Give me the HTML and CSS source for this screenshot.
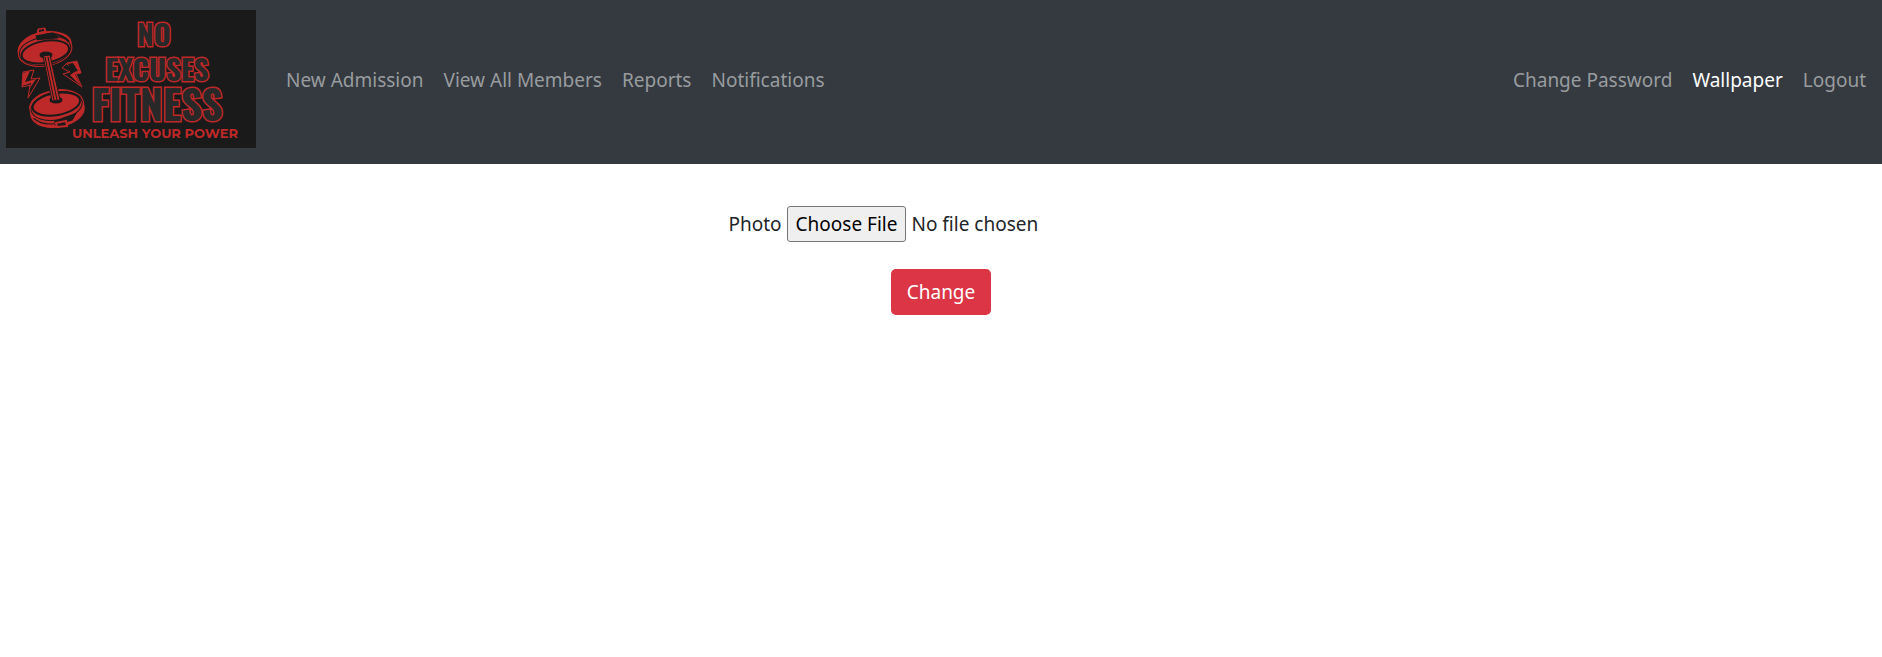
FILE: index.html
```
<!DOCTYPE html>
<html lang="en">
<head>
<meta charset="utf-8">
<meta name="viewport" content="width=device-width, initial-scale=1">
<title>Wallpaper</title>
<link rel="stylesheet" href="styles.css">
</head>
<body>
<nav class="navbar">
  <a class="brand" href="#" aria-label="No Excuses Fitness">
    <svg class="logo" viewBox="0 0 250 138" width="250" height="138">
      <rect width="250" height="138" fill="#1a1a1a"/>
      <g fill="none" stroke="#bd2828">
        <path d="M31 25 32 19 39 18 41 25Z" fill="#bd2828" stroke-width="1"/>
        <path d="M33 20 38 19 38 21 33 22Z" fill="#1a1a1a" stroke="none"/>
        <g transform="rotate(-10 39 40)">
          <path d="M12 39C12 29 24 22 39 22S66 29 66 36V42C65 50 53 56 39 56S13 50 12 42Z" fill="#bd2828" stroke-width="1"/>
          <path d="M13 40C14 31 26 27 39 27S64 31 65 40C65 49 53 55 39 55S13 49 13 40Z" fill="none" stroke="#1a1a1a" stroke-width="1"/>
          <ellipse cx="39" cy="42" rx="24" ry="11" fill="#bd2828" stroke="#1a1a1a" stroke-width="2"/>
          <path d="M43 25C53 25 61 30 64 36" stroke="#1a1a1a" stroke-width="2"/>
          <path d="M32 24H50L55 31 33 29Z" fill="#1a1a1a" stroke="none"/>
        </g>
        <g transform="rotate(-10 51 98)">
          <path d="M24 94C25 85 37 80 51 80S77 87 78 95V102C77 111 65 117 51 117S25 111 24 102Z" fill="#bd2828" stroke-width="1"/>
          <path d="M25 96C26 87 38 82 51 82S76 87 77 96C76 105 64 110 51 110S26 105 25 96Z" fill="none" stroke="#1a1a1a" stroke-width="1"/>
          <ellipse cx="51" cy="94" rx="24" ry="11" fill="#bd2828" stroke="#1a1a1a" stroke-width="2"/>
          <path d="M26 104C33 112 42 113 47 113" stroke="#1a1a1a" stroke-width="1"/>
          <path d="M46 110 70 106 64 113 46 115Z" fill="#1a1a1a" stroke="none"/>
        </g>
        <ellipse cx="40" cy="45" rx="7" ry="4" fill="#1a1a1a" stroke-width="1"/>
        <ellipse cx="50" cy="90" rx="7" ry="4" fill="#1a1a1a" stroke-width="1"/>
        <path d="M37 46 44 45 54 90 46 91Z" fill="#bd2828" stroke="#1a1a1a" stroke-width="1"/>
        <path d="M39 47 48 90M42 47 51 90" stroke="#1a1a1a" stroke-width="1"/>
        <path d="M50 113 60 111 61 116 51 117Z" fill="#1a1a1a" stroke-width="2"/>
        <path d="M17 62 28 60 25 69 34 68 22 88 24 75 16 77Z" fill="#1a1a1a" stroke-width="1"/>
        <path d="M17 63 24 61 19 72 30 69 24 78 25 73 16 76Z" fill="#bd2828" stroke="none"/>
        <path d="M61 53 71 51 75 63 70 64 76 77 57 64 64 62 56 58Z" fill="#1a1a1a" stroke-width="1"/>
        <path d="M71 52 75 63 69 64 75 76 64 65 70 61 60 54 66 52Z" fill="#bd2828" stroke="none"/>
        <path d="M62 54 67 53 72 61 66 62Z" fill="#1a1a1a" stroke="none"/>
      </g>
      <g class="logo-title">
        <text class="logo-line" x="148" y="36">NO</text>
        <text class="logo-line" x="151" y="71">EXCUSES</text>
        <text class="logo-name" x="151" y="111">FITNESS</text>
      </g>
      <text class="logo-tagline" x="149" y="128">UNLEASH YOUR POWER</text>
    </svg>
  </a>
  <ul class="nav-list">
    <li><a class="nav-link" href="#">New Admission</a></li>
    <li><a class="nav-link" href="#">View All Members</a></li>
    <li><a class="nav-link" href="#">Reports</a></li>
    <li><a class="nav-link" href="#">Notifications</a></li>
  </ul>
  <ul class="nav-list nav-end">
    <li><a class="nav-link" href="#">Change Password</a></li>
    <li><a class="nav-link active" href="#" aria-current="page">Wallpaper</a></li>
    <li><a class="nav-link" href="#">Logout</a></li>
  </ul>
</nav>
<main>
  <form class="photo-form">
    <div class="field">
      <label for="photo">Photo</label>
      <input class="file-input" type="file" id="photo" name="photo">
    </div>
    <button class="btn" type="submit">Change</button>
  </form>
</main>
</body>
</html>
```
FILE: styles.css
```
* {
  box-sizing: border-box;
}

body {
  margin: 0;
  background: #fff;
  color: #212529;
  font-family: "Segoe UI", "Noto Sans", sans-serif;
  font-size: 19px;
  line-height: 30px;
}

.navbar {
  display: flex;
  align-items: center;
  padding: 10px 6px 16px;
  background: #343a40;
}

.brand,
.logo {
  display: block;
}

.brand {
  margin-right: 20px;
}

.logo-title {
  fill: #282828;
  stroke: #bd2828;
  stroke-width: 3;
  paint-order: stroke;
  font-family: Oswald, Anton, "Liberation Sans", sans-serif;
  font-weight: 700;
  text-anchor: middle;
}

.logo-line {
  font-size: 29px;
}

.logo-name {
  font-size: 41px;
}

.logo-tagline {
  fill: #bd2828;
  font-family: Montserrat, "Open Sans", sans-serif;
  font-size: 13px;
  font-weight: 700;
  text-anchor: middle;
}

.nav-list {
  display: flex;
  margin: 0;
  padding: 0;
  list-style: none;
}

.nav-end {
  margin-left: auto;
}

.nav-link {
  display: block;
  padding: 11px 10px 9px;
  color: #999c9f;
  text-decoration: none;
}

.nav-link.active {
  color: #fff;
}

.photo-form {
  display: flex;
  flex-direction: column;
  align-items: center;
  gap: 27px;
  padding: 42px 20px;
}

.field {
  display: flex;
  align-items: center;
  gap: 5px;
}

.file-input {
  width: 367px;
  color: inherit;
  font: inherit;
}

.file-input::file-selector-button {
  margin: 0 5px 0 0;
  padding: 2px 8px;
  border: 1px solid #767676;
  border-radius: 3px;
  background: #efefef;
  color: #000;
  font: inherit;
}

.btn {
  padding: 8px 16px;
  border: 0;
  border-radius: 5px;
  background: #dc3545;
  color: #fff;
  font: inherit;
}
```
